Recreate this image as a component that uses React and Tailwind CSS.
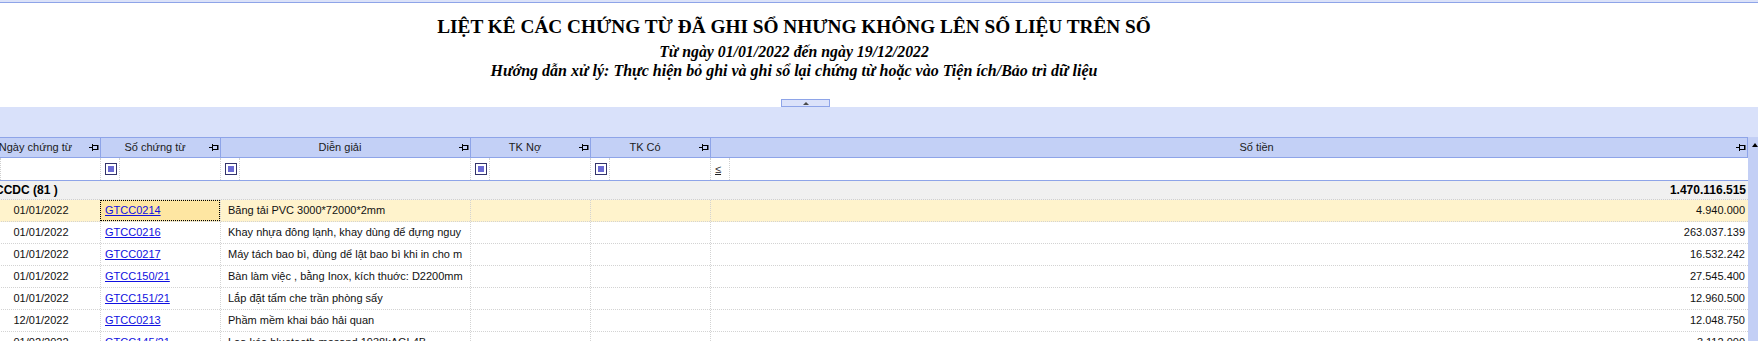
import React from 'react';

const rows = [
  { ngay: '01/01/2022', so: 'GTCC0214', dien: 'Băng tải PVC 3000*72000*2mm', tien: '4.940.000' },
  { ngay: '01/01/2022', so: 'GTCC0216', dien: 'Khay nhựa đông lạnh, khay dùng để đựng nguy', tien: '263.037.139' },
  { ngay: '01/01/2022', so: 'GTCC0217', dien: 'Máy tách bao bì, đùng dể lật bao bì khi in cho m', tien: '16.532.242' },
  { ngay: '01/01/2022', so: 'GTCC150/21', dien: 'Bàn làm việc , bằng Inox, kích thuớc: D2200mm', tien: '27.545.400' },
  { ngay: '01/01/2022', so: 'GTCC151/21', dien: 'Lắp đặt tấm che trần phòng sấy', tien: '12.960.500' },
  { ngay: '12/01/2022', so: 'GTCC0213', dien: 'Phầm mềm khai báo hải quan', tien: '12.048.750' },
  { ngay: '01/02/2022', so: 'GTCC145/21', dien: 'Loa kéo bluetooth mosand 1938kAGL4B', tien: '3.112.000' },
];

const cols = 'grid grid-cols-[118px_120px_250px_120px_120px_1fr]';

function Pin() {
  return (
    <svg width="10" height="8" viewBox="0 0 10 8" className="shrink-0 mr-[1px]">
      <path d="M0 3.5H3.5M3.5 0V7M3.5 1.5H8.5V5.5H3.5" stroke="#000" strokeWidth="1" fill="none" />
      <rect x="8" y="1" width="1.5" height="5" fill="#000" />
    </svg>
  );
}

function FilterBox() {
  return (
    <div className="w-[12px] h-[12px] border border-[#33336b] p-[2px] bg-white">
      <div className="w-full h-full bg-[#6b6bd3]" />
    </div>
  );
}

function HeaderCell({ label, first, className = '' }) {
  return (
    <div className={`flex items-center h-[19px] ${first ? '' : 'border-l border-[#8ea4e8]'} ${className}`}>
      <span className="flex-1 text-center whitespace-nowrap">{label}</span>
      <Pin />
    </div>
  );
}

function FilterCell({ first, children }) {
  return (
    <div className={`flex h-[22px] ${first ? '' : 'border-l border-dotted border-[#cfcfcf]'}`}>
      <div className="w-[19px] flex items-center pl-[4px] border-r border-dotted border-[#cfcfcf]">{children}</div>
    </div>
  );
}

export default function App() {
  return (
    <div className="w-[1758px] h-[341px] overflow-hidden bg-white font-['Liberation_Sans',Arial,sans-serif] text-[11px] text-[#111]">
      <div className="h-[2px] bg-[#dbe2f9]" />
      <div className="h-px bg-[#8ea4e8]" />

      <div className="h-[104px] flex flex-col">
        <div className="flex flex-col items-center pt-[12px] pr-[170px] font-['Liberation_Serif','Times_New_Roman',serif] text-black">
          <div className="text-[19.3px] leading-[24px] font-bold">
            LIỆT KÊ CÁC CHỨNG TỪ ĐÃ GHI SỔ NHƯNG KHÔNG LÊN SỐ LIỆU TRÊN SỔ
          </div>
          <div className="mt-[3px] text-[15.8px] leading-[19px] font-bold italic">
            Từ ngày 01/01/2022 đến ngày 19/12/2022
          </div>
          <div className="text-[16px] leading-[19px] font-bold italic">
            Hướng dẫn xử lý: Thực hiện bỏ ghi và ghi sổ lại chứng từ hoặc vào Tiện ích/Bảo trì dữ liệu
          </div>
        </div>
        <div className="mt-auto flex pl-[781px]">
          <div className="w-[49px] h-[8px] border border-[#8ea4e8] bg-[#dbe2fa] flex items-center justify-center">
            <svg width="6" height="3" viewBox="0 0 6 3">
              <path d="M0 3L3 0L6 3Z" fill="#4a4a4a" />
            </svg>
          </div>
        </div>
      </div>

      <div className="h-[30px] bg-[#d9e1fa]" />

      <div className="flex">
        <div className="flex-1 min-w-0 -ml-[18px]">
          <div className={`${cols} bg-[#c3d0f6] border-t border-b border-[#8ea4e8] text-[#1b1b1b]`}>
            <HeaderCell label="Ngày chứng từ" first />
            <HeaderCell label="Số chứng từ" />
            <HeaderCell label="Diễn giải" />
            <HeaderCell label="TK Nợ" />
            <HeaderCell label="TK Có" />
            <HeaderCell label="Số tiền" className="pl-[66px] border-r" />
          </div>

          <div className={`${cols} bg-white border-b border-[#8ea4e8]`}>
            <FilterCell first />
            <FilterCell><FilterBox /></FilterCell>
            <FilterCell><FilterBox /></FilterCell>
            <FilterCell><FilterBox /></FilterCell>
            <FilterCell><FilterBox /></FilterCell>
            <FilterCell>
              <span className="underline leading-none text-[#222]">≤</span>
            </FilterCell>
          </div>

          <div className="flex items-center justify-between h-[19px] bg-[#f0f0f0] border-b border-dotted border-[#cfcfcf] font-bold text-[12px] text-black">
            <span className="pl-[13px] whitespace-nowrap">CCDC (81 )</span>
            <span className="pr-[2px]">1.470.116.515</span>
          </div>

          {rows.map((r, i) => {
            const sel = i === 0;
            return (
              <div
                key={r.so}
                className={`${cols} h-[22px] border-b border-dotted border-[#d3d3d3] ${sel ? 'bg-[#fff3cc]' : 'bg-white'}`}
              >
                <div className="flex items-center justify-center">{r.ngay}</div>
                <div
                  className={`flex items-center pl-[4px] overflow-hidden ${
                    sel ? 'bg-[#fee6a2] border border-dotted border-black' : 'border-l border-dotted border-[#d3d3d3]'
                  }`}
                >
                  <span className="text-[#1010e0] underline whitespace-nowrap">{r.so}</span>
                </div>
                <div className="flex items-center pl-[7px] pr-[8px] overflow-hidden whitespace-nowrap border-l border-dotted border-[#d3d3d3]">
                  {r.dien}
                </div>
                <div className="border-l border-dotted border-[#d3d3d3]" />
                <div className="border-l border-dotted border-[#d3d3d3]" />
                <div className="flex items-center justify-end pr-[3px] border-l border-dotted border-[#d3d3d3]">
                  {r.tien}
                </div>
              </div>
            );
          })}
        </div>

        <div className="w-[10px] shrink-0 bg-[#c3cff5] flex justify-end pt-[6px]">
          <svg width="6" height="4" viewBox="0 0 6 4">
            <path d="M0 4L3 0L6 4Z" fill="#000" />
          </svg>
        </div>
      </div>
    </div>
  );
}
